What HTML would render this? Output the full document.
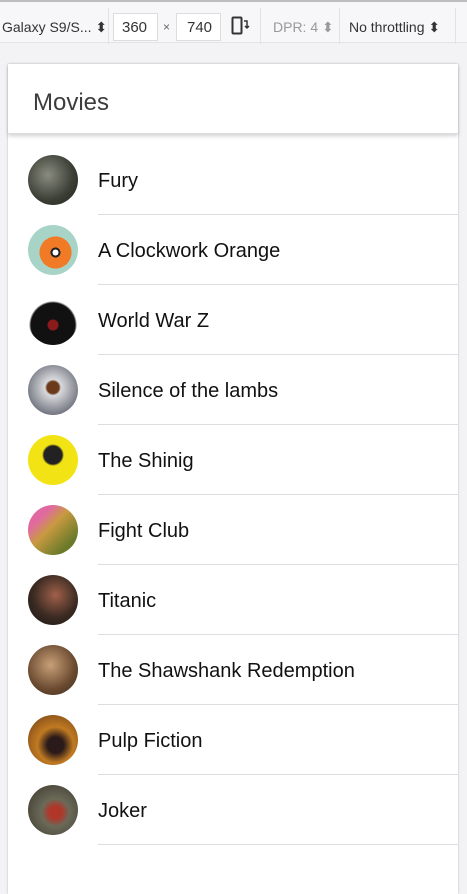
<!DOCTYPE html>
<html><head><meta charset="utf-8"><style>
*{box-sizing:border-box;margin:0;padding:0}
body{width:467px;height:880px;overflow:hidden;background:#f3f3f5;font-family:"Liberation Sans",Arial,sans-serif;position:relative}
.tb{position:absolute;left:0;top:0;width:467px;height:43px;background:#f7f7f9;border-top:2px solid #bdbdbd;border-bottom:1px solid #e3e3e6;font-size:14px;color:#333}
.tb span{position:absolute;top:16px;white-space:nowrap}
.box{position:absolute;top:11px;height:28px;background:#fff;border:1px solid #ddd}
.sep{position:absolute;top:6px;width:1px;height:36px;background:#e3e3e6}
.card{position:absolute;left:8px;top:64px;width:450px;height:830px;background:#fff;box-shadow:0 0 2px rgba(0,0,0,.25)}
.hd{height:70px;border-bottom:1px solid #ddd;box-shadow:0 2px 4px rgba(0,0,0,.18);position:relative}
.hd span{position:absolute;left:25px;top:25px;font-size:24px;color:#3c3c3c}
.row{position:absolute;left:0;width:450px;height:70px}
.av{position:absolute;left:20px;top:10px;width:50px;height:50px;border-radius:50%}
.row .t{position:absolute;left:90px;top:0;right:0;height:70px;border-bottom:1px solid #ddd;font-size:20px;color:#111;line-height:72px}
</style></head><body>
<div class="tb">
<span style="left:2px;top:17px">Galaxy S9/S... ⬍</span>
<div class="sep" style="left:108px"></div>
<div class="box" style="left:113px;width:45px"></div><span style="left:122px;top:17px;font-size:15px">360</span>
<span style="left:163px;top:18px;font-size:12px;color:#666">×</span>
<div class="box" style="left:176px;width:45px"></div><span style="left:187px;top:17px;font-size:15px">740</span>
<svg style="position:absolute;left:231px;top:14px" width="20" height="20"><rect x="1.5" y="1.5" width="9" height="16" rx="1" fill="none" stroke="#333" stroke-width="2"/><path d="M13 5h3v6M14 10l2 2 2-2" fill="none" stroke="#333" stroke-width="1.5"/></svg>
<div class="sep" style="left:260px"></div>
<span style="left:273px;top:17px;color:#999">DPR: 4 ⬍</span>
<div class="sep" style="left:339px"></div>
<span style="left:349px;top:17px">No throttling ⬍</span>
<div class="sep" style="left:455px"></div>
</div>
<div class="card">
<div class="hd"><span>Movies</span></div>
<div class="row" style="top:81px"><div class="av" style="background:radial-gradient(circle at 40% 40%,#8a8c80,#3b3e35 60%,#22241f)"></div><div class="t">Fury</div></div>
<div class="row" style="top:151px"><div class="av" style="background:radial-gradient(circle at 55% 55%,#fff 0 3px,#222 3px 5px,#f07a26 5px 16px,#a8d4c8 16px)"></div><div class="t">A Clockwork Orange</div></div>
<div class="row" style="top:221px"><div class="av" style="background:radial-gradient(circle at 50% 60%,#8b1a1a 0 5px,#111 6px 22px,#fff 24px)"></div><div class="t">World War Z</div></div>
<div class="row" style="top:291px"><div class="av" style="background:radial-gradient(circle at 50% 45%,#6b3a1a 0 6px,#d9dadd 8px,#3d4250)"></div><div class="t">Silence of the lambs</div></div>
<div class="row" style="top:361px"><div class="av" style="background:radial-gradient(circle at 50% 40%,#222 0 9px,#f2e414 11px)"></div><div class="t">The Shinig</div></div>
<div class="row" style="top:431px"><div class="av" style="background:linear-gradient(135deg,#e06aa0 0 25%,#c89a40 45%,#6b7a2a 80%)"></div><div class="t">Fight Club</div></div>
<div class="row" style="top:501px"><div class="av" style="background:radial-gradient(circle at 55% 40%,#a0604a,#3a2a22 55%,#1a1614)"></div><div class="t">Titanic</div></div>
<div class="row" style="top:571px"><div class="av" style="background:radial-gradient(circle at 45% 40%,#c8a078,#6a4a30 60%,#3a2a1e)"></div><div class="t">The Shawshank Redemption</div></div>
<div class="row" style="top:641px"><div class="av" style="background:radial-gradient(circle at 55% 60%,#2a1a1a 0 8px,#c07a22 18px,#6a3a16)"></div><div class="t">Pulp Fiction</div></div>
<div class="row" style="top:711px"><div class="av" style="background:radial-gradient(circle at 55% 55%,#b0362a 0 6px,#6a6a58 14px,#3a3228)"></div><div class="t">Joker</div></div>
</div>
</body></html>
